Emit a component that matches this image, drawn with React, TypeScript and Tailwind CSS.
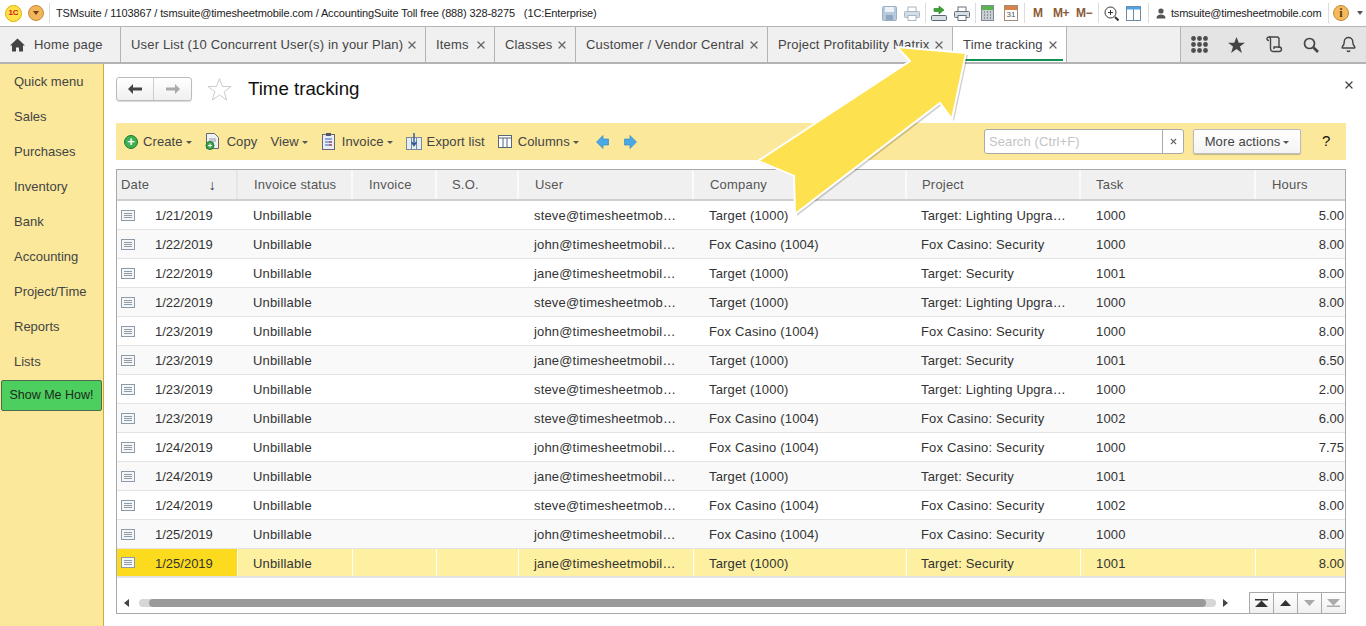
import { Bell, X } from "lucide-react";

const rows = [
  ["1/21/2019", "steve@timesheetmob…", "Target (1000)", "Target: Lighting Upgra…", "1000", "5.00"],
  ["1/22/2019", "john@timesheetmobil…", "Fox Casino (1004)", "Fox Casino: Security", "1000", "8.00"],
  ["1/22/2019", "jane@timesheetmobil…", "Target (1000)", "Target: Security", "1001", "8.00"],
  ["1/22/2019", "steve@timesheetmob…", "Target (1000)", "Target: Lighting Upgra…", "1000", "8.00"],
  ["1/23/2019", "john@timesheetmobil…", "Fox Casino (1004)", "Fox Casino: Security", "1000", "8.00"],
  ["1/23/2019", "jane@timesheetmobil…", "Target (1000)", "Target: Security", "1001", "6.50"],
  ["1/23/2019", "steve@timesheetmob…", "Target (1000)", "Target: Lighting Upgra…", "1000", "2.00"],
  ["1/23/2019", "steve@timesheetmob…", "Fox Casino (1004)", "Fox Casino: Security", "1002", "6.00"],
  ["1/24/2019", "john@timesheetmobil…", "Fox Casino (1004)", "Fox Casino: Security", "1000", "7.75"],
  ["1/24/2019", "jane@timesheetmobil…", "Target (1000)", "Target: Security", "1001", "8.00"],
  ["1/24/2019", "steve@timesheetmob…", "Fox Casino (1004)", "Fox Casino: Security", "1002", "8.00"],
  ["1/25/2019", "john@timesheetmobil…", "Fox Casino (1004)", "Fox Casino: Security", "1000", "8.00"],
  ["1/25/2019", "jane@timesheetmobil…", "Target (1000)", "Target: Security", "1001", "8.00"],
];

const menu = ["Quick menu", "Sales", "Purchases", "Inventory", "Bank", "Accounting", "Project/Time", "Reports", "Lists"];

const tabs = [
  { label: "User List (10 Concurrent User(s) in your Plan)", w: "w-[305px]" },
  { label: "Items", w: "w-[69px]" },
  { label: "Classes", w: "w-[81px]" },
  { label: "Customer / Vendor Central", w: "w-[192px]" },
  { label: "Project Profitability Matrix", w: "w-[185px]" },
];

const headers = [
  { label: "Invoice status", pl: "pl-[16px]" },
  { label: "Invoice", pl: "pl-[16px]" },
  { label: "S.O.", pl: "pl-[15px]" },
  { label: "User", pl: "pl-[16px]" },
  { label: "Company", pl: "pl-[16px]" },
  { label: "Project", pl: "pl-[15px]" },
  { label: "Task", pl: "pl-[15px]" },
  { label: "Hours", pl: "pl-[16px]" },
];

const cols = "grid grid-cols-[121px_115px_84px_82px_175px_213px_174px_175px_89px]";

const Caret = () => <span className="ml-[3px] mt-[1px] inline-block border-x-[3px] border-t-[3px] border-x-transparent border-t-[#555]" />;

const Sep = ({ ml }: { ml: string }) => <span className={`h-[20px] w-px bg-[#ddd] ${ml}`} />;

const RowIcon = () => (
  <svg width="14" height="11" viewBox="0 0 14 11" fill="none" stroke="#8d9aa8">
    <rect x="0.5" y="0.5" width="13" height="10" fill="#f4f6f8" />
    <path d="M3 3.5h8M3 5.5h8M3 7.5h8" />
  </svg>
);

const SaveIcon = () => (
  <svg width="15" height="15" viewBox="0 0 15 15">
    <rect x="0.5" y="0.5" width="14" height="14" rx="1" fill="#b7c9dc" stroke="#9bb0c6" />
    <rect x="3" y="1" width="9" height="5" fill="#eef3f8" />
    <rect x="4" y="9" width="7" height="5" fill="#8ea6be" />
  </svg>
);

const PrintIcon = ({ c = "#a9b6c4" }: { c?: string }) => (
  <svg width="16" height="15" viewBox="0 0 16 15">
    <rect x="4" y="1" width="8" height="5" fill="#fff" stroke={c} />
    <rect x="0.5" y="5.5" width="15" height="6" rx="1" fill="#d5dde5" stroke={c} />
    <rect x="4" y="9.5" width="8" height="5" fill="#fff" stroke={c} />
  </svg>
);

const Logo = () => (
  <span className="flex h-[17px] w-[17px] items-center justify-center rounded-full border border-[#e0b000] bg-[#ffe24a] text-[8px] font-bold leading-none text-[#d8141c]">
    1С
  </span>
);

const Arrow = () => (
  <svg className="pointer-events-none absolute left-0 top-0" width="1366" height="626">
    <polygon
      points="966,53 897,47 910,61 758,161 794,176 795,214 940,103 952,119"
      fill="#000"
      opacity="0.18"
      transform="translate(2 2)"
    />
    <polygon
      points="966,53 897,47 910,61 758,161 794,176 795,214 940,103 952,119"
      fill="#fee14e"
      stroke="#fff"
      strokeWidth="2"
    />
  </svg>
);

export default function App() {
  return (
    <div className="relative flex h-[626px] w-[1366px] flex-col overflow-hidden bg-white font-['Liberation_Sans',Arial,sans-serif] text-[13px] text-[#333]">
      {/* top system bar */}
      <div className="flex h-[27px] shrink-0 items-center border-b border-[#b5b5b5] bg-white text-[11px] text-[#222]">
        <div className="ml-[5px]"><Logo /></div>
        <span className="ml-[6px] flex h-[16px] w-[16px] items-center justify-center rounded-full border border-[#c58a30] bg-[#f3b45e]">
          <span className="border-x-[3px] border-t-[4px] border-x-transparent border-t-[#6b4510]" />
        </span>
        <Sep ml="ml-[5px]" />
        <span className="ml-[6px] whitespace-pre tracking-[-0.125px]">TSMsuite / 1103867 / tsmsuite@timesheetmobile.com / AccountingSuite Toll free (888) 328-8275   (1C:Enterprise)</span>
        <div className="ml-auto flex items-center">
          <SaveIcon />
          <span className="ml-[7px]"><PrintIcon /></span>
          <Sep ml="ml-[5px]" />
          <svg className="ml-[5px]" width="16" height="15" viewBox="0 0 16 15">
            <path d="M3 2.500h5V0l5 4-5 4V5.500H3z" fill="#3aa535" stroke="#1e7a1e" strokeWidth="0.6" />
            <rect x="0.5" y="9.5" width="15" height="5" rx="1" fill="#d8dee4" stroke="#5b6670" />
          </svg>
          <span className="ml-[7px]"><PrintIcon c="#66717c" /></span>
          <Sep ml="ml-[5px]" />
          <svg className="ml-[5px]" width="13" height="16" viewBox="0 0 13 16">
            <rect x="0.5" y="0.5" width="12" height="15" fill="#c9ced3" stroke="#7f8a94" />
            <rect x="1" y="1" width="11" height="4" fill="#5ab44f" />
            <path d="M3 7h1M6 7h1M9 7h1M3 10h1M6 10h1M9 10h1M3 13h1M6 13h1M9 13h1" stroke="#555" />
          </svg>
          <span className="ml-[10px] flex h-[16px] w-[14px] flex-col border border-[#a08a78] bg-white text-center text-[8px] leading-[10px] text-[#555]">
            <span className="h-[4px] shrink-0 bg-[#d9814a]" />31
          </span>
          <Sep ml="ml-[6px]" />
          <span className="ml-[8px] w-[10px] text-[12px] font-bold tracking-[-0.5px] text-[#8a5a36]">M</span>
          <span className="ml-[10px] w-[16px] whitespace-nowrap text-[12px] font-bold tracking-[-0.5px] text-[#8a5a36]">M+</span>
          <span className="ml-[7px] w-[15px] whitespace-nowrap text-[12px] font-bold tracking-[-0.5px] text-[#8a5a36]">M−</span>
          <Sep ml="ml-[7px]" />
          <svg className="ml-[5px]" width="15" height="15" viewBox="0 0 15 15" fill="none" stroke="#333">
            <circle cx="6.5" cy="6.5" r="5.5" />
            <path d="M11 11l3.5 3.5" strokeWidth="2" />
            <path d="M4 6.5h5M6.5 4v5" />
          </svg>
          <svg className="ml-[7px]" width="15" height="15" viewBox="0 0 15 15" fill="none">
            <rect x="0.5" y="0.5" width="14" height="14" fill="#fff" stroke="#6f8aa5" />
            <rect x="1" y="1" width="13" height="2.5" fill="#4da3e6" />
            <path d="M7.5 3v11" stroke="#6f8aa5" />
          </svg>
          <Sep ml="ml-[7px]" />
          <svg className="ml-[7px]" width="10" height="11" viewBox="0 0 10 11" fill="#555">
            <circle cx="5" cy="3" r="2.6" />
            <path d="M0.5 10.5c0-3 2-4 4.5-4s4.5 1 4.5 4z" />
          </svg>
          <span className="ml-[5px] w-[152px] whitespace-nowrap tracking-[-0.2px]">tsmsuite@timesheetmobile.com</span>
          <Sep ml="ml-[5px]" />
          <span className="ml-[4px] flex h-[16px] w-[16px] items-center justify-center rounded-full border border-[#c58a30] bg-[#f5b95e] font-['Liberation_Serif',serif] text-[12px] font-bold text-[#5a3a0a]">i</span>
          <span className="ml-[8px] mr-[3px] border-x-[3.500px] border-t-[4px] border-x-transparent border-t-[#555]" />
        </div>
      </div>

      {/* tab bar */}
      <div className="flex h-[37px] shrink-0 border-b-2 border-[#b4b4b4] bg-[#f0f0f0] text-[13px] tracking-[0.17px] text-[#444]">
        <div className="flex w-[121px] items-center border-r border-[#b4b4b4] pl-[10px]">
          <svg width="15" height="14" viewBox="0 0 15 14" fill="#444">
            <path d="M7.5 0.5L0 7.5h2v6h4v-4h3v4h4v-6h2z" />
          </svg>
          <span className="ml-[9px]">Home page</span>
        </div>
        {tabs.map((t) => (
          <div key={t.label} className={`flex ${t.w} shrink-0 items-center justify-between whitespace-nowrap border-r border-[#b4b4b4] pl-[10px] pr-[7px]`}>
            <span>{t.label}</span>
            <X size={12} strokeWidth={2.6} className="shrink-0 text-[#666]" />
          </div>
        ))}
        <div className="relative flex w-[114px] shrink-0 items-center justify-between border-r border-[#b4b4b4] bg-white pl-[10px] pr-[7px]">
          <span className="text-[#444]">Time tracking</span>
          <X size={12} strokeWidth={2.6} className="text-[#666]" />
          <span className="absolute bottom-[1px] left-[10px] right-[3px] h-[2px] bg-[#0f9150]" />
        </div>
        <div className="ml-auto flex w-[186px] items-center border-l border-[#b4b4b4] bg-[#e4e4e4] pl-[10px] text-[#444]">
          <svg width="17" height="17" viewBox="0 0 17 17" fill="#4d4d4d">
            {[2.5, 8.5, 14.5].map((y) => [2.5, 8.5, 14.5].map((x) => <circle key={`${x}-${y}`} cx={x} cy={y} r="2.4" />))}
          </svg>
          <svg className="ml-[20px]" width="17" height="16" viewBox="0 0 18 17" fill="#444">
            <path d="M9 0l2.4 6H18l-5.3 4 2 7L9 12.8 3.3 17l2-7L0 6h6.600z" />
          </svg>
          <svg className="ml-[21px]" width="17" height="17" viewBox="0 0 17 17" fill="none" stroke="#444" strokeWidth="1.4">
            <path d="M3 1h8c1 0 2 1 2 2v9" />
            <path d="M3 1c-1 0-2 .7-2 1.800 0 1 1 1.700 2 1.700" />
            <path d="M3 1c1 0 1.500 1 1.500 2v9.500c0 1.500 1 3 2.500 3h6c1.500 0 2.500-1 2.500-2.300s-1-2.200-2.500-2.200H8v2" />
          </svg>
          <svg className="ml-[20px]" width="16" height="16" viewBox="0 0 16 16" fill="none" stroke="#444">
            <circle cx="6.500" cy="6.500" r="5" strokeWidth="1.700" />
            <path d="M10.500 10.500l4.500 4.500" strokeWidth="2.600" />
          </svg>
          <Bell size={17} strokeWidth={2} className="ml-[21px] text-[#444]" />
        </div>
      </div>

      <div className="flex min-h-0 flex-1">
        {/* left menu */}
        <nav className="w-[104px] shrink-0 border-r border-[#c9ae3a] bg-[#fbe89b] pt-[1px] text-[#444]">
          {menu.map((m) => (
            <div key={m} className="flex h-[35px] items-center pb-[1px] pl-[14px]">{m}</div>
          ))}
          <div className="ml-[1px] flex h-[31px] w-[101px] items-center justify-center rounded-[2px] border border-[#4b6b50] bg-[#4dcf5f] text-[12.5px] text-[#1c2a1c]">
            Show Me How!
          </div>
        </nav>

        {/* main */}
        <main className="flex min-w-0 flex-1 flex-col pl-[12px] pr-[20px] pt-[13px]">
          <div className="flex h-[23px] items-center">
            <div className="flex h-[24px] w-[76px] rounded-[3px] border border-[#bbb] bg-gradient-to-b from-white to-[#f0f0f0] shadow-[0_1px_1px_rgba(0,0,0,0.15)]">
              <div className="flex w-[37px] items-center justify-center border-r border-[#ccc]">
                <svg width="14" height="10" viewBox="0 0 14 10" fill="#444"><path d="M0 5l5-5v3.500h9v3H5V10z" /></svg>
              </div>
              <div className="flex flex-1 items-center justify-center">
                <svg width="14" height="10" viewBox="0 0 14 10" fill="#aaa"><path d="M14 5L9 0v3.500H0v3h9V10z" /></svg>
              </div>
            </div>
            <svg className="ml-[15px] mt-[1px]" width="25" height="24" viewBox="0 0 25 24" fill="#fff" stroke="#ccc">
              <path d="M12.500 1.500l3 8h8.500l-6.800 5.200 2.500 8.300-7.200-5-7.200 5 2.500-8.300L1 9.500h8.500z" />
            </svg>
            <h1 className="ml-[16px] pt-[1px] text-[18.700px] leading-none text-[#111]">Time tracking</h1>
            <X size={12} strokeWidth={2.6} className="relative -top-[4px] ml-auto mr-[-9px] text-[#444]" />
          </div>

          {/* toolbar */}
          <div className="mt-[23px] flex h-[37px] shrink-0 items-center whitespace-nowrap bg-[#fbe89b] tracking-[0.1px] text-[#444]">
            <span className="ml-[8px] flex h-[14px] w-[14px] items-center justify-center rounded-full border border-[#1f7a35] bg-[#3fb04f] text-[13px] font-bold leading-none text-white">+</span>
            <span className="ml-[5px]">Create</span><Caret />
            <svg className="ml-[13px]" width="15" height="17" viewBox="0 0 15 17">
              <path d="M1.500.5h8l4 4v11h-12z" fill="#eef2f0" stroke="#667" />
              <path d="M4 6h7M4 8h7" stroke="#99a" />
              <circle cx="5" cy="12.500" r="4" fill="#3fa24a" stroke="#1f7a35" />
              <path d="M3 12.500h4M5 10.500v4" stroke="#fff" />
            </svg>
            <span className="ml-[7px]">Copy</span>
            <span className="ml-[13px]">View</span><Caret />
            <svg className="ml-[14px]" width="13" height="17" viewBox="0 0 13 17">
              <rect x="0.5" y="1.500" width="12" height="15" fill="#e8eef5" stroke="#667" />
              <rect x="4" y="0" width="5" height="3" fill="#556" />
              <path d="M3 6h7M3 9h7M3 12h7" stroke="#3060c0" />
              <path d="M7 9h3M7 12h3" stroke="#d03030" />
            </svg>
            <span className="ml-[7px]">Invoice</span><Caret />
            <svg className="ml-[13px]" width="16" height="17" viewBox="0 0 16 17">
              <rect x="0.5" y="4.500" width="15" height="12" fill="#e4ecf4" stroke="#7a8a9a" />
              <path d="M5.500 5v11M10.500 5v11" stroke="#7a8a9a" />
              <path d="M8 0v12M5.500 9l2.500 3.500L10.500 9" stroke="#2d5a90" strokeWidth="1.400" fill="none" />
            </svg>
            <span className="ml-[5px]">Export list</span>
            <svg className="ml-[13px]" width="14" height="13" viewBox="0 0 14 13" fill="#fff" stroke="#556677">
              <rect x="0.500" y="0.500" width="13" height="12" />
              <path d="M0.500 3h13M5 3v9.500M9 3v9.500" />
            </svg>
            <span className="ml-[6px]">Columns</span><Caret />
            <svg className="ml-[17px]" width="13" height="14" viewBox="0 0 13 14" fill="#4aa8e6" stroke="#2a7fc0" strokeWidth="0.600">
              <path d="M7 .5L.5 7 7 13.500V10h5.500V4H7z" />
            </svg>
            <svg className="ml-[15px]" width="13" height="14" viewBox="0 0 13 14" fill="#4aa8e6" stroke="#2a7fc0" strokeWidth="0.600">
              <path d="M6 .5L12.500 7 6 13.500V10H.5V4H6z" />
            </svg>
            <div className="ml-auto flex h-[25px] w-[200px] rounded-[3px] border border-[#aaa] bg-white">
              <span className="flex flex-1 items-center pl-[4px] text-[#c4c4c4]">Search (Ctrl+F)</span>
              <span className="flex w-[21px] items-center justify-center border-l border-[#aaa]">
                <X size={9} strokeWidth={3} className="text-[#666]" />
              </span>
            </div>
            <div className="ml-[9px] flex h-[25px] w-[108px] items-center justify-center rounded-[2px] border border-[#bbb] bg-gradient-to-b from-white to-[#f3f3f3] shadow-[0_1px_1px_rgba(0,0,0,0.2)]">
              More actions<Caret />
            </div>
            <span className="ml-[21px] mr-[15px] w-[9px] text-[15px] text-[#111]">?</span>
          </div>

          {/* table */}
          <div className="mt-[9px] flex h-[445px] shrink-0 flex-col border border-[#a9a9a9]">
            <div className={`${cols} h-[31px] shrink-0 border-b-2 border-[#cfcfcf] tracking-[0.2px] text-[#555]`}>
              <div className="flex items-center justify-between border-r-2 border-[#e6e6e6] bg-[#f0f0f0] pl-[4px] pr-[20px]">
                <span>Date</span>
                <span className="text-[14px] leading-none text-[#333]">↓</span>
              </div>
              {headers.map((h) => (
                <div key={h.label} className={`flex items-center border-r-2 border-[#fafafa] bg-[#f0f0f0] ${h.pl} last:border-r-0`}>{h.label}</div>
              ))}
            </div>
            {rows.map((r, i) => {
              const sel = i === rows.length - 1;
              const cell = `flex items-center whitespace-nowrap border-r pt-[2px] tracking-[0.17px] ${sel ? "border-white" : "border-transparent"}`;
              return (
                <div
                  key={i}
                  className={`${cols} h-[29px] shrink-0 ${sel ? "border-b-2 border-[#e3e3e3] bg-[#fdf0a0]" : i % 2 === 1 ? "border-b border-[#e3e3e3] bg-[#f9f9f9]" : "border-b border-[#e3e3e3] bg-white"}`}
                >
                  <div className={`flex items-center border-r pl-[4px] ${sel ? "border-white bg-[#fcdb1f]" : "border-transparent"}`}>
                    <RowIcon />
                    <span className="ml-[20px] pt-[2px]">{r[0]}</span>
                  </div>
                  <div className={`${cell} pl-[15px]`}>Unbillable</div>
                  <div className={cell} />
                  <div className={cell} />
                  <div className={`${cell} pl-[15px]`}>{r[1]}</div>
                  <div className={`${cell} pl-[15px]`}>{r[2]}</div>
                  <div className={`${cell} pl-[14px]`}>{r[3]}</div>
                  <div className={`${cell} pl-[15px]`}>{r[4]}</div>
                  <div className="flex items-center justify-end pr-[1px] pt-[2px]">{r[5]}</div>
                </div>
              );
            })}
            {/* horizontal scroll and pager */}
            <div className="mt-auto flex h-[22px] items-end">
              <span className="mb-[6px] ml-[7px] border-y-[4px] border-r-[5px] border-y-transparent border-r-[#444]" />
              <div className="mb-[6px] ml-[10px] flex h-[8px] w-[1077px] rounded-full bg-[#d6d6d6] px-[10px]">
                <div className="h-full w-full rounded-full bg-[#999]" />
              </div>
              <span className="mb-[6px] ml-[7px] border-y-[4px] border-l-[5px] border-y-transparent border-l-[#444]" />
              <div className="ml-auto flex h-[21px] w-[96px] border-l border-t border-[#a9a9a9]">
                {[
                  <svg key="a" width="13" height="8" viewBox="0 0 13 8" fill="#333"><path d="M0 0h13v1.500H0zM6.500 1.500L13 8H0z" /></svg>,
                  <svg key="b" width="11" height="6" viewBox="0 0 11 6" fill="#333"><path d="M5.500 0L11 6H0z" /></svg>,
                  <svg key="c" width="11" height="6" viewBox="0 0 11 6" fill="#aaa"><path d="M5.500 6L11 0H0z" /></svg>,
                  <svg key="d" width="13" height="8" viewBox="0 0 13 8" fill="#aaa"><path d="M0 8h13V6.500H0zM6.500 6.500L13 0H0z" /></svg>,
                ].map((ic, k) => (
                  <span key={k} className="flex flex-1 items-center justify-center border-r border-[#a9a9a9] bg-gradient-to-b from-white to-[#f0f0f0] last:border-r-0">{ic}</span>
                ))}
              </div>
            </div>
          </div>
        </main>
      </div>

      <Arrow />
    </div>
  );
}
